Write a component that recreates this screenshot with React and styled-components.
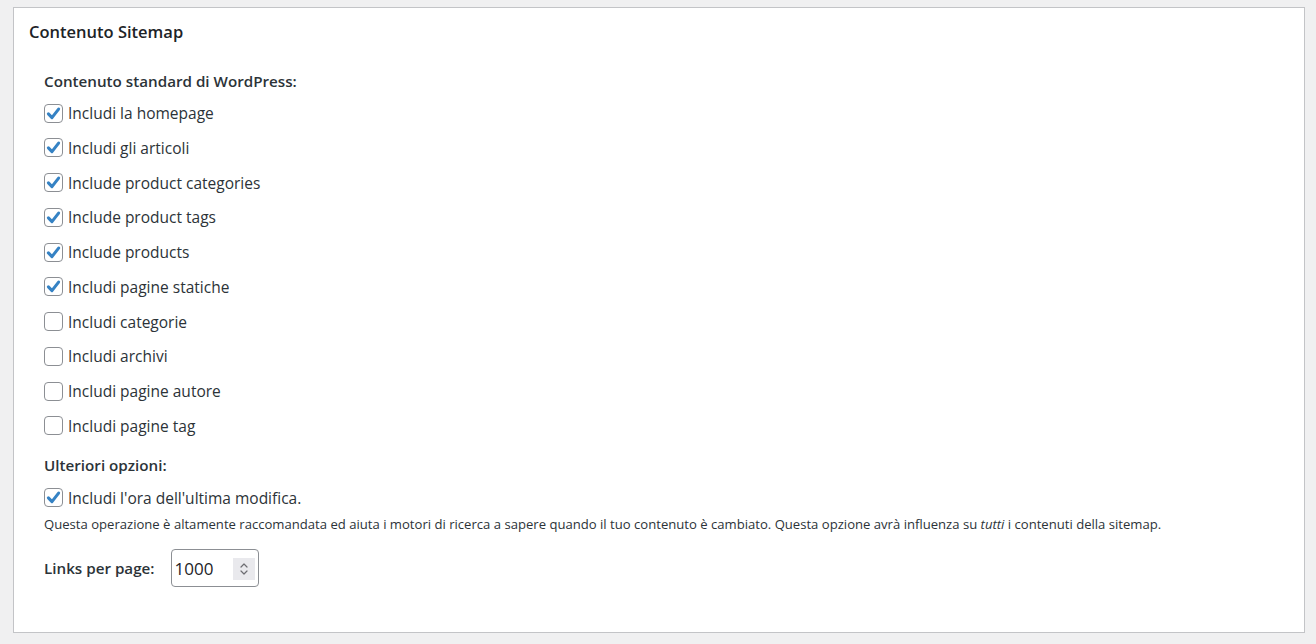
import React from 'react'
import styled, { createGlobalStyle } from 'styled-components'

const GlobalStyle = createGlobalStyle`
  html, body {
    margin: 0;
    padding: 0;
    background: #f0f0f1;
  }
  body {
    font-family: "Open Sans", "Noto Sans", "Liberation Sans", sans-serif;
    color: #1d2327;
  }
`

const Page = styled.div`
  padding: 7px 11px 11px 13px;
`

const Panel = styled.section`
  background: #fff;
  border: 1px solid #c3c4c7;
  height: 626px;
  box-sizing: border-box;
  padding: 12px 15px 0 15px;
`

const Title = styled.h2`
  margin: 0;
  font-size: 16.5px;
  font-weight: 600;
  line-height: 24px;
  color: #1d2327;
`

const Body = styled.div`
  padding: 26px 0 0 15px;
`

const GroupLabel = styled.div`
  font-size: 15.2px;
  font-weight: 600;
  line-height: 22px;
  color: #2c3338;
  margin-bottom: ${p => p.gap || 0}px;
`

const List = styled.ul`
  list-style: none;
  margin: 0;
  padding: 0;
  display: flex;
  flex-direction: column;
  gap: 12.75px;
  margin-bottom: ${p => p.gap || 0}px;
`

const Row = styled.li`
  display: flex;
  align-items: center;
  height: 22px;
`

const Label = styled.label`
  display: flex;
  align-items: center;
  gap: 5px;
  font-size: 15.5px;
  color: #2c3338;
  cursor: pointer;
`

const Box = styled.span`
  width: 19px;
  height: 19px;
  box-sizing: border-box;
  border: 1px solid #8c8f94;
  border-radius: 4px;
  background: #fff;
  display: flex;
  align-items: center;
  justify-content: center;
  flex-shrink: 0;
`

const Hint = styled.p`
  margin: 6px 0 0;
  font-size: 13.1px;
  line-height: 18px;
  color: #2c3338;
`

const FieldRow = styled.div`
  display: flex;
  align-items: center;
  gap: 17px;
  margin-top: 16px;
`

const NumberBox = styled.div`
  width: 88px;
  height: 38px;
  box-sizing: border-box;
  border: 1px solid #8c8f94;
  border-radius: 4px;
  display: flex;
  align-items: center;
  padding: 2px 2px 0 2px;
`

const NumberInput = styled.input`
  border: 0;
  outline: 0;
  width: 58px;
  font-family: "Open Sans", "Liberation Sans", sans-serif;
  font-size: 17px;
  color: #1d2327;
  padding: 0;
  background: transparent;
`

const Spinner = styled.span`
  width: 22px;
  height: 22px;
  background: #e9e9ed;
  display: flex;
  align-items: center;
  justify-content: center;
  margin-left: auto;
  margin-right: 1px;
`

const Check = ({ checked }) => (
  <Box>
    {checked && (
      <svg width="17" height="17" viewBox="0 0 20 20">
        <path d="M4 10.5 L8.2 14.8 L16 4.8" fill="none" stroke="#3582c4" strokeWidth="3.6" strokeLinecap="round" strokeLinejoin="round" />
      </svg>
    )}
  </Box>
)

const Option = ({ checked, children }) => (
  <Row>
    <Label>
      <Check checked={checked} />
      {children}
    </Label>
  </Row>
)

const standard = [
  ['Includi la homepage', true],
  ['Includi gli articoli', true],
  ['Include product categories', true],
  ['Include product tags', true],
  ['Include products', true],
  ['Includi pagine statiche', true],
  ['Includi categorie', false],
  ['Includi archivi', false],
  ['Includi pagine autore', false],
  ['Includi pagine tag', false],
]

export default function App() {
  return (
    <Page>
      <GlobalStyle />
      <Panel>
        <Title>Contenuto Sitemap</Title>
        <Body>
          <GroupLabel gap={10}>Contenuto standard di WordPress:</GroupLabel>
          <List gap={17}>
            {standard.map(([text, on]) => (
              <Option key={text} checked={on}>{text}</Option>
            ))}
          </List>
          <GroupLabel gap={11}>Ulteriori opzioni:</GroupLabel>
          <Option checked>Includi l'ora dell'ultima modifica.</Option>
          <Hint>
            Questa operazione è altamente raccomandata ed aiuta i motori di ricerca a sapere quando il tuo contenuto è cambiato. Questa opzione avrà influenza su <em>tutti</em> i contenuti della sitemap.
          </Hint>
          <FieldRow>
            <GroupLabel>Links per page:</GroupLabel>
            <NumberBox>
              <NumberInput type="text" defaultValue="1000" />
              <Spinner>
                <svg width="12" height="16" viewBox="0 0 12 16">
                  <path d="M3 6 L6 3 L9 6 M3 10 L6 13 L9 10" fill="none" stroke="#6d6d72" strokeWidth="1.2" strokeLinecap="round" strokeLinejoin="round" />
                </svg>
              </Spinner>
            </NumberBox>
          </FieldRow>
        </Body>
      </Panel>
    </Page>
  )
}
